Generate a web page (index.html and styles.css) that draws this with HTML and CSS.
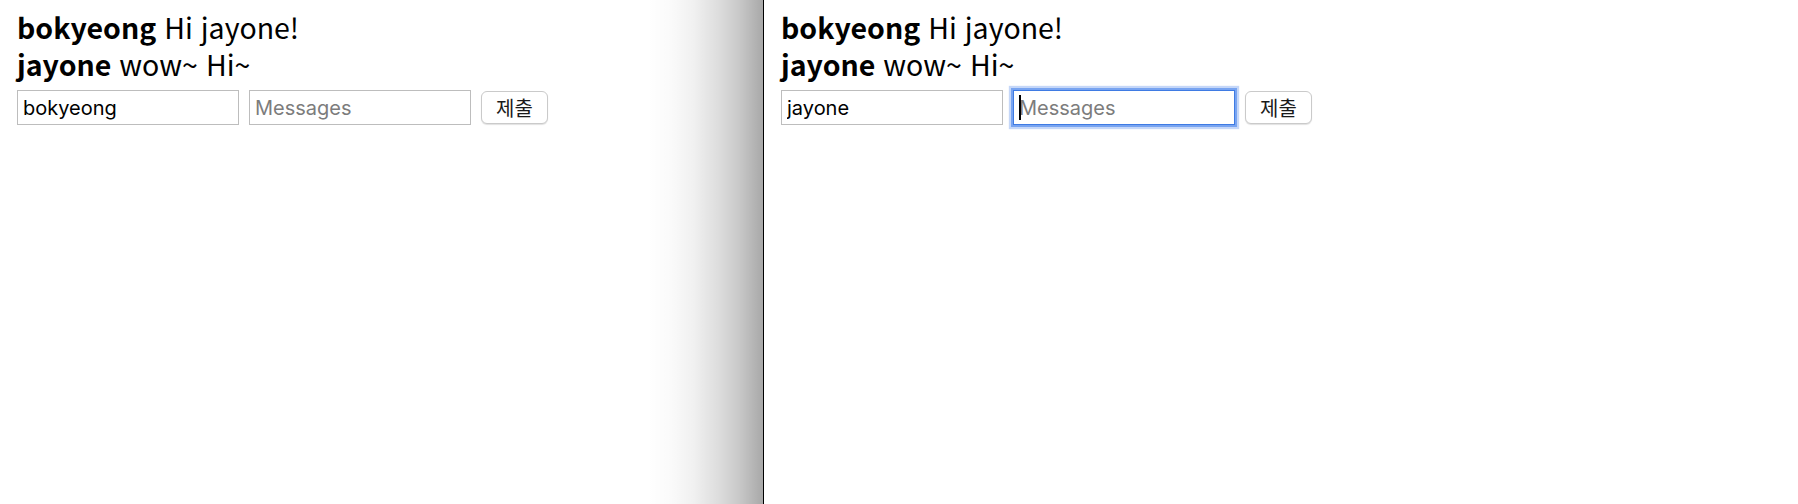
FILE: index.html
```html
<!DOCTYPE html>
<html lang="ko">
<head>
<meta charset="utf-8">
<title>Chat</title>
<link rel="stylesheet" href="styles.css">
</head>
<body>
<div class="split">
  <section class="pane pane-left">
    <div class="messages">
      <div class="msg"><b class="name">bokyeong</b> Hi jayone!</div>
      <div class="msg"><b class="name">jayone</b> wow~ Hi~</div>
    </div>
    <form class="composer">
      <input class="field" type="text" value="bokyeong">
      <input class="field" type="text" placeholder="Messages">
      <button class="submit" type="button">제출</button>
    </form>
  </section>
  <section class="pane pane-right">
    <div class="messages">
      <div class="msg"><b class="name">bokyeong</b> Hi jayone!</div>
      <div class="msg"><b class="name">jayone</b> wow~ Hi~</div>
    </div>
    <form class="composer">
      <input class="field" type="text" value="jayone">
      <span class="focus-wrap">
        <input class="field field-focused" type="text" placeholder="Messages">
        <span class="caret"></span>
      </span>
      <button class="submit" type="button">제출</button>
    </form>
  </section>
</div>
</body>
</html>
```

FILE: styles.css
```css
html, body {
  margin: 0;
  padding: 0;
  background: #ffffff;
}

.split {
  display: flex;
  height: 504px;
  overflow: hidden;
}

.pane {
  padding: 8px 16px 0 17px;
  box-sizing: border-box;
  position: relative;
  background: #ffffff;
}

.pane-left {
  width: 763px;
  flex: none;
}

.pane-left::after {
  content: "";
  position: absolute;
  top: 0;
  right: 0;
  bottom: 0;
  width: 115px;
  background: linear-gradient(to right,
    rgba(0,0,0,0) 0%,
    rgba(0,0,0,0.02) 20%,
    rgba(0,0,0,0.06) 40%,
    rgba(0,0,0,0.13) 60%,
    rgba(0,0,0,0.22) 80%,
    rgba(0,0,0,0.34) 100%);
  pointer-events: none;
}

.pane-right {
  flex: 1;
  border-left: 1px solid #000000;
}

.messages {
  font-family: "Noto Sans CJK KR", "Noto Sans", sans-serif;
  font-size: 28.5px;
  line-height: 37px;
  color: #000000;
}

.name {
  font-weight: 700;
}

.composer {
  display: flex;
  align-items: center;
  gap: 10px;
  margin: 8px 0 0;
}

.field {
  width: 222px;
  height: 35px;
  box-sizing: border-box;
  margin: 0;
  padding: 0 5px;
  border: 1px solid #bdbdbd;
  border-radius: 0;
  font-family: "Inter", "Liberation Sans", sans-serif;
  font-size: 20px;
  color: #000000;
  background: #ffffff;
  outline: none;
}

.field::placeholder {
  color: #7c7c7c;
}

.focus-wrap {
  position: relative;
  display: flex;
}

.field-focused {
  border: 1px solid #3f7be3;
  box-shadow: 0 0 0 2px #78a4f1, 0 0 1px 4px rgba(126, 167, 240, 0.45);
}

.caret {
  position: absolute;
  left: 6px;
  top: 5px;
  width: 2px;
  height: 25px;
  background: #000000;
}

.submit {
  height: 33px;
  width: 67px;
  box-sizing: border-box;
  margin: 0;
  padding: 0;
  border: 1px solid #cacaca;
  border-radius: 6px;
  background: #ffffff;
  box-shadow: 0 1px 1px rgba(0,0,0,0.12);
  font-family: "Noto Sans CJK KR", sans-serif;
  font-size: 20px;
  color: #1a1a1a;
}
```
